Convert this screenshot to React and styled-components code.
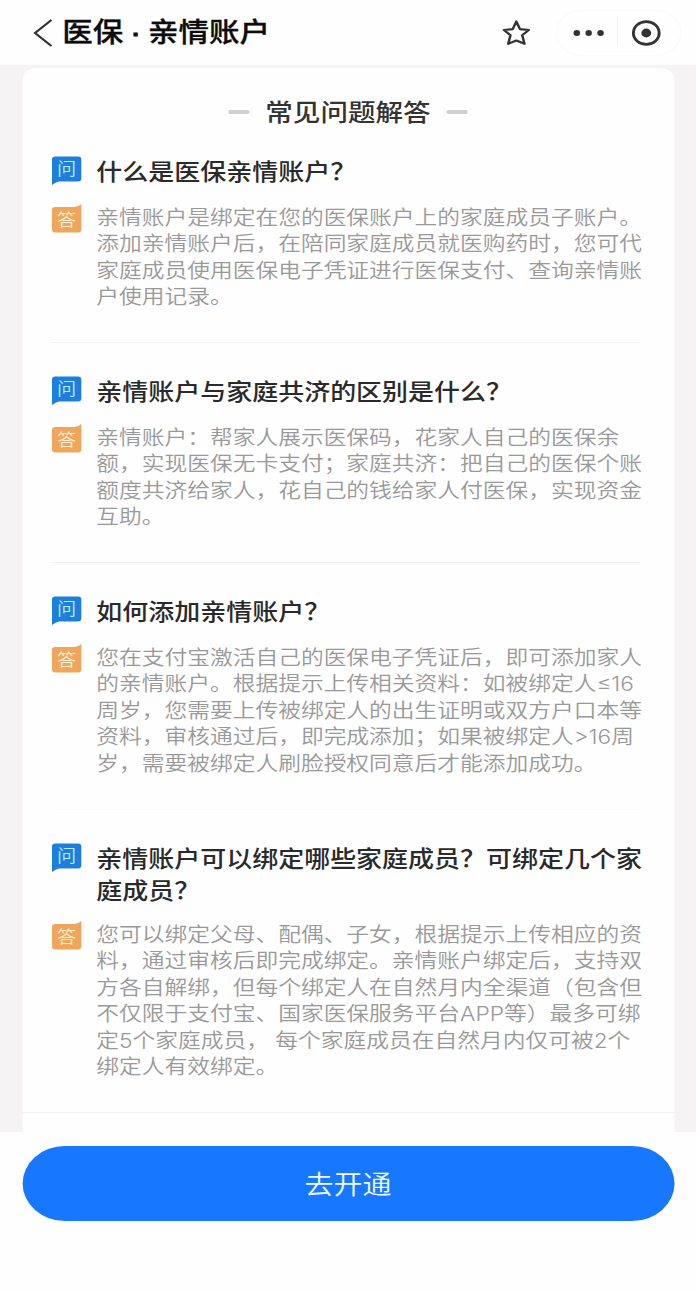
import React from 'react';
import styled, { createGlobalStyle } from 'styled-components';

const GlobalStyle = createGlobalStyle`
  body {
    margin: 0;
    overflow: hidden;
    background: #fefefe;
  }
  * {
    box-sizing: border-box;
  }
`;

// The phone layout is 616 wide and is widened to fill the 696 window.
const Page = styled.div`
  display: flex;
  flex-direction: column;
  width: 616px;
  height: 1292px;
  transform: scaleX(1.12987);
  transform-origin: 0 0;
  font-family: Inter, 'Noto Sans CJK SC', sans-serif;
  color: #2c2c2c;
`;

const Header = styled.header`
  display: flex;
  align-items: center;
  flex: none;
  height: 65px;
  padding: 0 13px 0 29px;
  background: #fefefe;
`;

const Title = styled.h1`
  flex: 1;
  margin: 1px 0 0 8px;
  font-family: 'Liberation Sans', 'Noto Sans CJK SC', sans-serif;
  font-size: 27px;
  font-weight: 500;
  line-height: 40px;
  white-space: pre;
  color: #0c0c0c;
  -webkit-text-stroke: 0.3px #0c0c0c;
`;

const Dot = styled.span`
  margin: 0 -1px;
  -webkit-text-stroke: 1.2px #0c0c0c;
`;

const Capsule = styled.div`
  display: flex;
  align-items: center;
  height: 46px;
  margin: 0 0 0 22px;
  padding: 0 17px 0 14px;
  border: 1px solid #fafafa;
  border-radius: 23px;
`;

const Separator = styled.i`
  width: 1px;
  height: 29px;
  margin: 0 12px 0 11px;
  background: #f2f2f2;
`;

const Body = styled.main`
  flex: none;
  height: 1067px;
  padding: 3px 19.5px 0;
  overflow: hidden;
  background: #f5f3f4;
`;

const Card = styled.section`
  height: 1064px;
  padding-top: 27px;
  border-radius: 12px 12px 0 0;
  background: #fefefe;
`;

const Heading = styled.h2`
  display: flex;
  align-items: center;
  justify-content: center;
  gap: 14px;
  margin: 0;
  font-size: 24.4px;
  font-weight: 500;
  line-height: 34px;
  color: #333;

  &::before,
  &::after {
    content: '';
    width: 19px;
    height: 4px;
    border-radius: 2px;
    background: #d0d0d0;
  }
`;

const Item = styled.article`
  margin: 0 30px 0 26.5px;
  padding: ${p => (p.$first ? 26 : 32)}px 0 31px;
  border-bottom: 1px solid ${p => (p.$faint ? '#fbfbfb' : '#f1f1f1')};

  &:last-child {
    margin: 0;
    padding-right: 30px;
    padding-left: 26.5px;
  }
`;

const Row = styled.div`
  display: flex;
  align-items: flex-start;
  gap: 13.2px;
`;

const Question = styled.h3`
  margin: -1px 0 1px;
  font-family: 'Noto Sans CJK SC', sans-serif;
  font-size: 23px;
  font-weight: 500;
  line-height: 32px;
  white-space: nowrap;
  color: #2a2a2a;
`;

const Answer = styled.p`
  margin: 0;
  padding-top: ${p => p.$gap || 17.6}px;
  font-size: 20.14px;
  font-weight: 350;
  line-height: 26.6px;
  color: #999;
`;

const Line = styled.span`
  display: block;
  height: ${p => p.$height}px;
  white-space: pre;
`;

const Badge = styled.svg`
  flex: none;
  width: 26px;
  height: 29px;
  margin-top: ${p => p.$top}px;
  overflow: visible;
  font-family: 'Noto Sans CJK SC', sans-serif;
  font-size: 17px;
  font-weight: 350;
`;

const Footer = styled.footer`
  flex: 1;
  padding: 14px 19.5px 0;
  background: #fefefe;
`;

const Button = styled.button`
  display: block;
  width: 100%;
  height: 75px;
  padding: 0 0 2px;
  border: 0;
  border-radius: 38px;
  background: #1877ff;
  font-family: 'Noto Sans CJK SC', sans-serif;
  font-size: 25.7px;
  font-weight: 350;
  line-height: 73px;
  color: #f2fbff;
`;

const items = [
  {
    question: ['什么是医保亲情账户？'],
    answer: [
      '亲情账户是绑定在您的医保账户上的家庭成员子账户。',
      '添加亲情账户后，在陪同家庭成员就医购药时，您可代',
      '家庭成员使用医保电子凭证进行医保支付、查询亲情账',
      '户使用记录。',
    ],
  },
  {
    question: ['亲情账户与家庭共济的区别是什么？'],
    answer: [
      '亲情账户：帮家人展示医保码，花家人自己的医保余',
      '额，实现医保无卡支付；家庭共济：把自己的医保个账',
      '额度共济给家人，花自己的钱给家人付医保，实现资金',
      '互助。',
    ],
  },
  {
    question: ['如何添加亲情账户？'],
    faint: true,
    answer: [
      '您在支付宝激活自己的医保电子凭证后，即可添加家人',
      '的亲情账户。根据提示上传相关资料：如被绑定人≤16',
      '周岁，您需要上传被绑定人的出生证明或双方户口本等',
      '资料，审核通过后，即完成添加；如果被绑定人>16周',
      '岁，需要被绑定人刷脸授权同意后才能添加成功。',
    ],
  },
  {
    question: ['亲情账户可以绑定哪些家庭成员？可绑定几个家', '庭成员？'],
    gap: 16,
    answer: [
      '您可以绑定父母、配偶、子女，根据提示上传相应的资',
      '料，通过审核后即完成绑定。亲情账户绑定后，支持双',
      '方各自解绑，但每个绑定人在自然月内全渠道（包含但',
      '不仅限于支付宝、国家医保服务平台APP等）最多可绑',
      '定5个家庭成员， 每个家庭成员在自然月内仅可被2个',
      '绑定人有效绑定。',
    ],
  },
];

const AskBadge = () => (
  <Badge viewBox="0 0 26 29" $top={1}>
    <path d="M3 0.5H23Q26 0.5 26 3.5V22.5Q26 25.5 23 25.5H6Q3.5 26 0 29V3.5Q0 0.5 3 0.5Z" fill="#1d7fdb" />
    <text x="13" y="19.2" textAnchor="middle" fill="#b9f0fb">
      问
    </text>
  </Badge>
);

const ReplyBadge = ({ top }) => (
  <Badge viewBox="0 0 26 29" $top={top}>
    <path d="M3 3H20Q23 3 26 0V25.5Q26 28.5 23 28.5H3Q0 28.5 0 25.5V6Q0 3 3 3Z" fill="#efa55c" />
    <text x="13" y="21.8" textAnchor="middle" fill="#fff0cf">
      答
    </text>
  </Badge>
);

const Lines = ({ text, height }) =>
  text.map(line => (
    <Line key={line} $height={height}>
      {line}
    </Line>
  ));

export default () => (
  <Page>
    <GlobalStyle />
    <Header>
      <svg width="18" height="28" viewBox="0 0 18 28" fill="none" stroke="#333" strokeWidth="2">
        <path d="M16.5 1L2 14L16.5 27" />
      </svg>
      <Title>
        医保 <Dot>·</Dot> 亲情账户
      </Title>
      <svg width="26" height="26" viewBox="0 0 26 26" fill="none" stroke="#333" strokeWidth="2.2" strokeLinejoin="round">
        <path d="M13 1.5L16.2 9.1L24 10L18.2 15.3L20.2 23.8L13 20.5L5.8 23.8L7.8 15.3L2 10L9.8 9.1Z" />
      </svg>
      <Capsule>
        <svg width="28" height="8" viewBox="0 0 28 8" fill="#333">
          <circle cx="3.5" cy="4" r="2.9" />
          <circle cx="14" cy="4" r="2.9" />
          <circle cx="24.5" cy="4" r="2.9" />
        </svg>
        <Separator />
        <svg width="26" height="26" viewBox="0 0 26 26">
          <circle cx="13" cy="13" r="11.4" fill="none" stroke="#333" strokeWidth="2.6" />
          <circle cx="13" cy="13" r="4.4" fill="#333" />
        </svg>
      </Capsule>
    </Header>
    <Body>
      <Card>
        <Heading>常见问题解答</Heading>
        {items.map((item, i) => (
          <Item key={item.question[0]} $first={i === 0} $faint={item.faint}>
            <Row>
              <AskBadge />
              <Question>
                <Lines text={item.question} height={32} />
              </Question>
            </Row>
            <Row>
              <ReplyBadge top={(item.gap || 17.6) - 1} />
              <Answer $gap={item.gap}>
                <Lines text={item.answer} height={26.6} />
              </Answer>
            </Row>
          </Item>
        ))}
      </Card>
    </Body>
    <Footer>
      <Button>去开通</Button>
    </Footer>
  </Page>
);
